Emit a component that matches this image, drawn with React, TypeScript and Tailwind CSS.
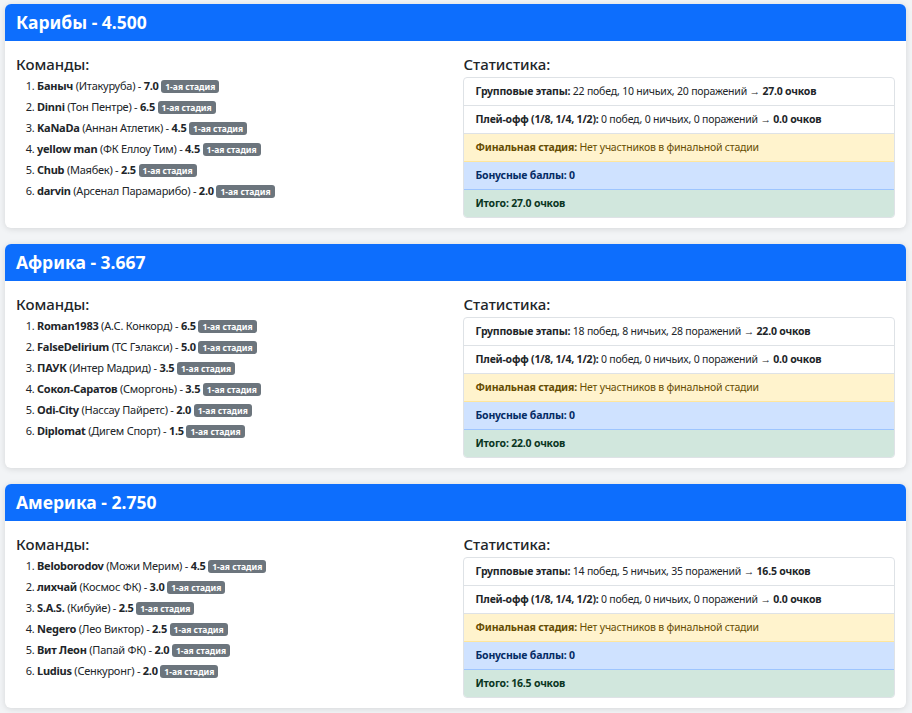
import React from "react";

type Team = { nick: string; club: string; pts: string };
type Region = {
  name: string;
  score: string;
  teams: Team[];
  group: string;
  total: string;
};

const regions: Region[] = [
  {
    name: "Карибы",
    score: "4.500",
    teams: [
      { nick: "Баныч", club: "Итакуруба", pts: "7.0" },
      { nick: "Dinni", club: "Тон Пентре", pts: "6.5" },
      { nick: "KaNaDa", club: "Аннан Атлетик", pts: "4.5" },
      { nick: "yellow man", club: "ФК Еллоу Тим", pts: "4.5" },
      { nick: "Chub", club: "Маябек", pts: "2.5" },
      { nick: "darvin", club: "Арсенал Парамарибо", pts: "2.0" },
    ],
    group: "22 побед, 10 ничьих, 20 поражений",
    total: "27.0",
  },
  {
    name: "Африка",
    score: "3.667",
    teams: [
      { nick: "Roman1983", club: "А.С. Конкорд", pts: "6.5" },
      { nick: "FalseDelirium", club: "ТС Гэлакси", pts: "5.0" },
      { nick: "ПАУК", club: "Интер Мадрид", pts: "3.5" },
      { nick: "Сокол-Саратов", club: "Сморгонь", pts: "3.5" },
      { nick: "Odi-City", club: "Нассау Пайретс", pts: "2.0" },
      { nick: "Diplomat", club: "Дигем Спорт", pts: "1.5" },
    ],
    group: "18 побед, 8 ничьих, 28 поражений",
    total: "22.0",
  },
  {
    name: "Америка",
    score: "2.750",
    teams: [
      { nick: "Beloborodov", club: "Можи Мерим", pts: "4.5" },
      { nick: "лихчай", club: "Космос ФК", pts: "3.0" },
      { nick: "S.A.S.", club: "Кибуйе", pts: "2.5" },
      { nick: "Negero", club: "Лео Виктор", pts: "2.5" },
      { nick: "Вит Леон", club: "Папай ФК", pts: "2.0" },
      { nick: "Ludius", club: "Сенкуронг", pts: "2.0" },
    ],
    group: "14 побед, 5 ничьих, 35 поражений",
    total: "16.5",
  },
];

function RegionCard({ r }: { r: Region }) {
  return (
    <div className="mb-4 rounded-[6px] bg-white shadow-[0_1px_6px_rgba(0,0,0,0.12)] overflow-hidden">
      <div className="h-[37px] bg-[#0d6efd] px-[11px] flex items-center">
        <h4 className="text-white font-bold text-[17.5px] leading-none">
          {r.name} - {r.score}
        </h4>
      </div>
      <div className="grid grid-cols-2 gap-x-3 px-[11px] pt-[12px] pb-[10px]">
        <div>
          <h5 className="text-[15px] font-medium leading-[22px] text-[#212529]">Команды:</h5>
          <ol className="list-decimal pl-[21px] text-[11px] tracking-[-0.25px] text-[#212529]">
            {r.teams.map((t) => (
              <li key={t.nick} className="leading-[21px]">
                <b className="font-bold">{t.nick}</b> ({t.club}) - <b className="font-bold">{t.pts}</b>{" "}
                <span className="inline-block align-middle -mt-[2px] h-[13px] leading-[13px] rounded-[3px] bg-[#6c757d] px-[4px] text-[8.5px] tracking-normal font-bold text-white">
                  1-ая стадия
                </span>
              </li>
            ))}
          </ol>
        </div>
        <div>
          <h5 className="text-[15px] font-medium leading-[22px] text-[#212529] ml-[2px]">Статистика:</h5>
          <div className="mt-[2px] ml-[1px] rounded-[4px] border border-[#dee2e6] overflow-hidden text-[10.5px] tracking-[-0.2px] text-[#212529]">
            <div className="h-[28px] px-[12px] flex items-center border-b border-[#dee2e6]">
              <span>
                <b className="font-bold">Групповые этапы:</b> {r.group} → <b className="font-bold">{r.total} очков</b>
              </span>
            </div>
            <div className="h-[28px] px-[12px] flex items-center border-b border-[#dee2e6]">
              <span>
                <b className="font-bold">Плей-офф (1/8, 1/4, 1/2):</b> 0 побед, 0 ничьих, 0 поражений →{" "}
                <b className="font-bold">0.0 очков</b>
              </span>
            </div>
            <div className="h-[28px] px-[12px] flex items-center bg-[#fff3cd] text-[#664d03] border-b border-[#ffe69c]">
              <span>
                <b className="font-bold">Финальная стадия:</b> Нет участников в финальной стадии
              </span>
            </div>
            <div className="h-[28px] px-[12px] flex items-center bg-[#cfe2ff] text-[#052c65] border-b border-[#9ec5fe]">
              <b className="font-bold">Бонусные баллы: 0</b>
            </div>
            <div className="h-[27px] px-[12px] flex items-center bg-[#d1e7dd] text-[#0a3622]">
              <b className="font-bold">Итого: {r.total} очков</b>
            </div>
          </div>
        </div>
      </div>
    </div>
  );
}

export default function App() {
  return (
    <div
      className="min-h-screen bg-[#f2f4f6] pt-[4px] pl-[5px] pr-[6px]"
      style={{ fontFamily: '"Noto Sans", "Open Sans", sans-serif' }}
    >
      {regions.map((r) => (
        <RegionCard key={r.name} r={r} />
      ))}
    </div>
  );
}
